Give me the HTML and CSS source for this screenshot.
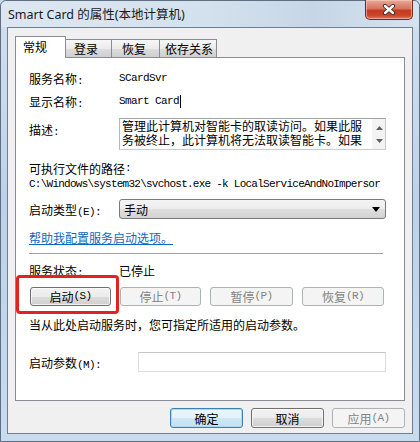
FILE: index.html
```html
<!DOCTYPE html>
<html lang="zh-CN">
<head>
<meta charset="utf-8">
<title>Smart Card 的属性(本地计算机)</title>
<link rel="stylesheet" href="styles.css">
</head>
<body>
<div class="window">
  <div class="titlebar">
    <span class="title">Smart Card 的属性(本地计算机)</span>
    <div class="close" aria-label="关闭">
      <svg width="14" height="11" viewBox="0 0 14 11">
        <path d="M3 2 L11 9 M11 2 L3 9" stroke="#3a2a28" stroke-width="4.2" stroke-linecap="round" fill="none"/>
        <path d="M3 2 L11 9 M11 2 L3 9" stroke="#ffffff" stroke-width="2.4" stroke-linecap="round" fill="none"/>
      </svg>
    </div>
  </div>
  <div class="client">
    <div class="tabs">
      <div class="tab active">常规</div>
      <div class="tab t2">登录</div>
      <div class="tab t3">恢复</div>
      <div class="tab t4">依存关系</div>
    </div>
    <div class="panel">
      <div class="row r1"><span class="label">服务名称<span class="mono">:</span></span><span class="mono">SCardSvr</span></div>
      <div class="row r2"><span class="label">显示名称<span class="mono">:</span></span><span class="mono">Smart Card</span><span class="caret"></span></div>
      <div class="row desc">
        <span class="label dlabel">描述<span class="mono">:</span></span>
        <div class="textbox">
          <div class="tb-text"><div class="tl">管理此计算机对智能卡的取读访问。如果此服</div><div class="tl">务被终止，此计算机将无法取读智能卡。如果</div></div>
          <div class="scroll">
            <svg width="7" height="4" viewBox="0 0 7 4"><path d="M0 4 L3.5 0 L7 4 Z" fill="#606060"/></svg>
            <svg width="7" height="4" viewBox="0 0 7 4"><path d="M0 0 L3.5 4 L7 0 Z" fill="#606060"/></svg>
          </div>
        </div>
      </div>
      <div class="row exe">可执行文件的路径<span class="mono">:</span></div>
      <div class="row path"><span class="pathtext">C:\Windows\system32\svchost.exe -k LocalServiceAndNoImpersor</span></div>
      <div class="row type">
        <span class="label">启动类型<span class="mono">(E):</span></span>
        <div class="select"><span>手动</span>
          <svg width="8" height="5" viewBox="0 0 8 5"><path d="M0 0 L8 0 L4 5 Z" fill="#000"/></svg>
        </div>
      </div>
      <div class="row link"><a href="#">帮助我配置服务启动选项。</a></div>
      <div class="sep"></div>
      <div class="row status"><span class="label">服务状态<span class="mono">:</span></span><span>已停止</span></div>
      <div class="row btns">
        <div class="btn">启动<span class="mono">(S)</span></div>
        <div class="btn disabled">停止<span class="mono">(T)</span></div>
        <div class="btn disabled">暂停<span class="mono">(P)</span></div>
        <div class="btn disabled">恢复<span class="mono">(R)</span></div>
      </div>
      <div class="row note">当从此处启动服务时，您可指定所适用的启动参数。</div>
      <div class="row param">
        <span class="label plabel">启动参数<span class="mono">(M):</span></span>
        <div class="input"></div>
      </div>
    </div>
    <div class="footer">
      <div class="btn fbtn default">确定</div>
      <div class="btn fbtn">取消</div>
      <div class="btn fbtn disabled">应用<span class="mono">(A)</span></div>
    </div>
  </div>
  <div class="highlight"></div>
</div>
</body>
</html>
```
FILE: styles.css
```css
* { box-sizing: border-box; margin: 0; padding: 0; }
html, body { width: 420px; height: 442px; overflow: hidden; }
body {
  font-family: "Noto Sans CJK SC", "Liberation Sans", sans-serif;
  font-size: 12px;
  color: #000;
  background: #c9dcef;
}
.mono { font-family: "Liberation Mono", "Noto Sans CJK SC", monospace; font-size: 11px; letter-spacing: -0.6px; }

.window {
  position: relative;
  width: 420px;
  height: 442px;
  display: flex;
  flex-direction: column;
  border: 1px solid #5f6f82;
  border-radius: 6px 6px 0 0;
  background: linear-gradient(to bottom, #dbe6f1 0px, #cfdeee 30px, #bcd2ea 200px, #c8dbef 442px);
}
.titlebar {
  height: 26px;
  display: flex;
  justify-content: space-between;
  align-items: flex-start;
  background: linear-gradient(to right, #dde7f1 0%, #d3e1ee 50%, #c7d6e6 75%, #d5e2ef 100%);
  border-radius: 6px 6px 0 0;
}
.title {
  padding: 5px 0 0 7px;
  font-family: "Noto Sans", "Noto Sans CJK SC", sans-serif;
  font-size: 12.5px;
  line-height: 17px;
  color: #1a1a1a;
}
.close {
  width: 48px;
  height: 20px;
  margin: -1px 6px 0 0;
  border: 1px solid #6e2b20;
  border-top: none;
  border-radius: 0 0 5px 5px;
  background: linear-gradient(to bottom, #e9a99b 0%, #d8735e 45%, #c43b20 55%, #c9452a 80%, #d8785e 100%);
  box-shadow: inset 0 0 0 1px rgba(255, 210, 200, 0.55);
  display: flex;
  align-items: center;
  justify-content: center;
}

.client {
  flex: 1;
  margin: 0 6px 7px 6px;
  border: 1px solid #6e7f93;
  background: #f0f0f0;
  padding: 8px 7px 0 7px;
  display: flex;
  flex-direction: column;
}

.tabs {
  height: 22px;
  margin-bottom: -1px;
  display: flex;
  align-items: flex-end;
  position: relative;
  z-index: 1;
}
.tab {
  height: 18px;
  margin-bottom: 1px;
  margin-left: -1px;
  border: 1px solid #898c95;
  border-bottom: none;
  background: linear-gradient(to bottom, #f7f7f7 0%, #ebebeb 50%, #dddddd 51%, #cfcfcf 100%);
  line-height: 17px;
  padding-left: 8px;
}
.tab.active {
  height: 22px;
  margin-bottom: 0;
  margin-left: 0;
  width: 51px;
  background: #fff;
  position: relative;
  z-index: 2;
  line-height: 20px;
  padding-left: 7px;
}
.t2 { width: 47px; }
.t3 { width: 49px; padding-left: 10px; }
.t4 { width: 58px; padding-left: 5px; }

.panel {
  height: 344px;
  background: #fff;
  border: 1px solid #898c95;
  padding: 10px 18px 0 13px;
  display: flex;
  flex-direction: column;
}
.row { display: flex; align-items: center; white-space: nowrap; }
.label { width: 90px; flex: none; }
.r1 { height: 20px; }
.r2 { height: 20px; margin-top: 3px; }
.caret { width: 1px; height: 13px; background: #000; margin-left: 1px; }
.desc { height: 32px; margin-top: 7px; align-items: flex-start; }
.dlabel { padding-top: 2px; line-height: 20px; }
.textbox {
  flex: 1;
  height: 32px;
  border: 1px solid #c9cbd0;
  border-top-color: #9fa3aa;
  border-left-color: #b5b8be;
  display: flex;
}
.tb-text {
  flex: 1;
  padding: 0 0 0 2px;
  font-size: 12px;
  display: flex;
  flex-direction: column;
}
.tl { height: 14px; line-height: 14px; }
.scroll {
  width: 13px;
  background: #f3f3f3;
  border-left: 1px solid #f6f6f6;
  display: flex;
  flex-direction: column;
  align-items: center;
  justify-content: space-between;
  padding: 7px 0 6px;
}
.exe { height: 16px; margin-top: 10px; }
.path { height: 16px; }
.pathtext { font-family: "Liberation Mono", monospace; font-size: 11px; letter-spacing: -0.75px; }
.type { height: 20px; margin-top: 7px; }
.select {
  flex: 1;
  height: 20px;
  border: 1px solid #7a7a7a;
  border-radius: 3px;
  background: linear-gradient(to bottom, #f4f4f4 0%, #ececec 50%, #dfdfdf 51%, #d2d2d2 100%);
  display: flex;
  align-items: center;
  justify-content: space-between;
  padding: 0 5px 0 4px;
}
.link { height: 16px; margin-top: 10px; }
.link a { color: #0b6ac0; text-decoration: underline; }
.sep { height: 1px; margin-top: 8px; margin-right: 3px; background: #a0a0a0; }
.status { height: 16px; margin-top: 8px; }
.btns {
  height: 19px;
  margin-top: 9px;
  margin-left: 1px;
  display: grid;
  grid-template-columns: 81px 81px 83px 82px;
  column-gap: 9px;
}
.btn {
  height: 19px;
  border: 1px solid #707070;
  border-radius: 3px;
  background: linear-gradient(to bottom, #f2f2f2 0%, #ebebeb 50%, #dddddd 51%, #cfcfcf 100%);
  box-shadow: inset 0 0 0 1px rgba(255, 255, 255, 0.7);
  display: flex;
  align-items: center;
  justify-content: center;
  line-height: 17px;
}
.btn.disabled {
  border-color: #adb2b5;
  background: #f4f4f4;
  color: #838383;
  box-shadow: none;
}
.note { height: 16px; margin-top: 10px; }
.param { height: 20px; margin-top: 20px; }
.plabel { width: 109px; }
.input {
  flex: 1;
  height: 20px;
  border: 1px solid #dcdde0;
  border-top-color: #c4c6ca;
  background: #fff;
}

.footer {
  margin-top: 7px;
  display: flex;
  justify-content: flex-end;
  gap: 8px;
}
.fbtn { width: 73px; height: 20px; }
.btn.default {
  border-color: #3c7fb1;
  background: linear-gradient(to bottom, #eef7fc 0%, #e3f1fa 50%, #cfe7f5 51%, #c3e0f2 100%);
  box-shadow: inset 0 0 0 1px #a8dbf5;
}

.highlight {
  position: absolute;
  left: 15px;
  top: 274px;
  width: 103px;
  height: 39px;
  border: 3px solid #e3211f;
  border-radius: 4px;
  pointer-events: none;
}
```
